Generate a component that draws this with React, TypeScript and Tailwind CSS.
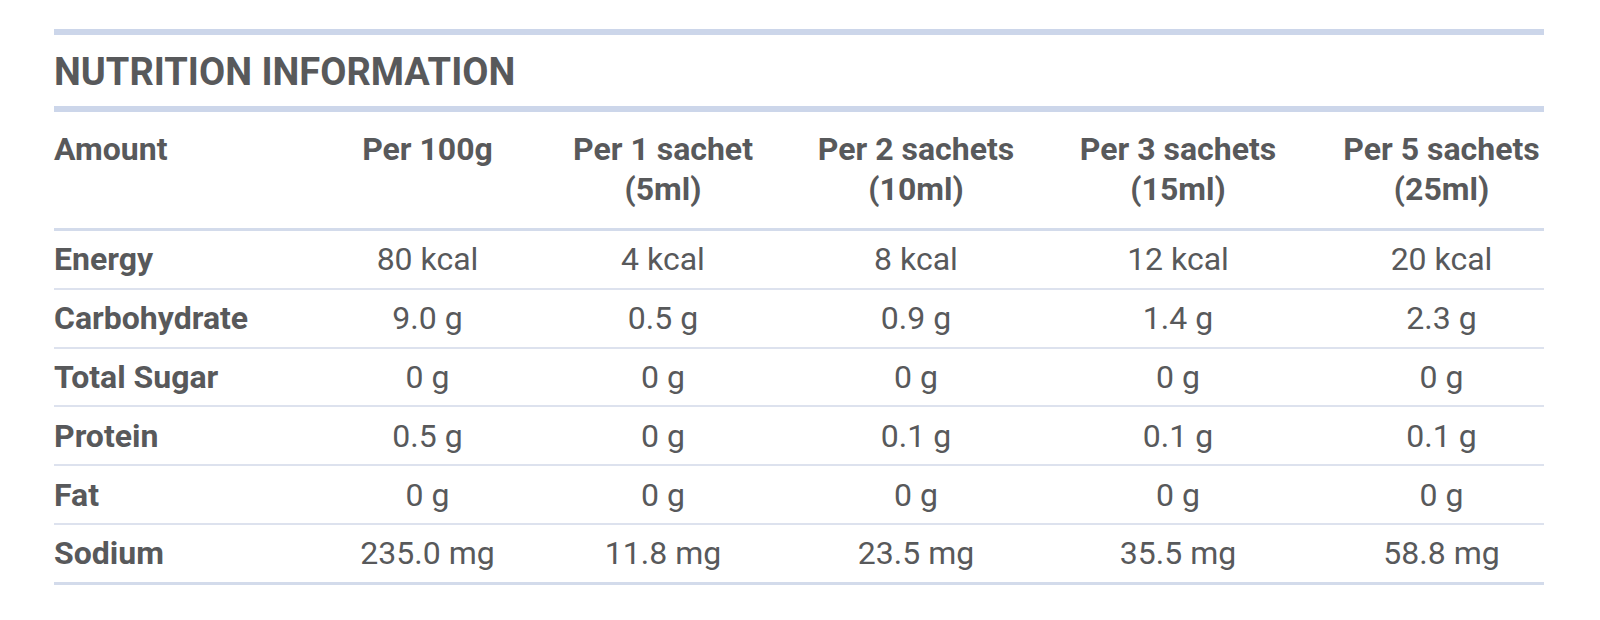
import React from "react";

const cols = "grid grid-cols-[266px_215px_256px_250px_298px_205px]";

const rows: [string, string[]][] = [
  ["Energy", ["80 kcal", "4 kcal", "8 kcal", "12 kcal", "20 kcal"]],
  ["Carbohydrate", ["9.0 g", "0.5 g", "0.9 g", "1.4 g", "2.3 g"]],
  ["Total Sugar", ["0 g", "0 g", "0 g", "0 g", "0 g"]],
  ["Protein", ["0.5 g", "0 g", "0.1 g", "0.1 g", "0.1 g"]],
  ["Fat", ["0 g", "0 g", "0 g", "0 g", "0 g"]],
  ["Sodium", ["235.0 mg", "11.8 mg", "23.5 mg", "35.5 mg", "58.8 mg"]],
];

const cellCls = ["text-center", "text-center", "text-center", "text-center pr-[24px]", "text-center"];

export default function App() {
  return (
    <div
      className="w-[1600px] h-[620px] bg-white text-[#58595b]"
      style={{ fontFamily: "Roboto, 'Liberation Sans', sans-serif" }}
    >
      <div className="ml-[54px] w-[1490px] pt-[29px]">
        <div className="h-[6px] bg-[#ccd6ea]" />
        <div className="h-[71px] flex items-center pt-[2px] text-[38px] font-bold leading-none">
          NUTRITION INFORMATION
        </div>
        <div className="h-[6px] bg-[#ccd6ea]" />
        <div
          className={`${cols} pt-[17px] pb-[19px] text-[32px] font-bold leading-[40px] border-b-[3px] border-[#d3dbeb]`}
        >
          <div>Amount</div>
          <div className={cellCls[0]}>Per 100g</div>
          <div className={cellCls[1]}>
            Per 1 sachet
            <br />
            (5ml)
          </div>
          <div className={cellCls[2]}>
            Per 2 sachets
            <br />
            (10ml)
          </div>
          <div className={cellCls[3]}>
            Per 3 sachets
            <br />
            (15ml)
          </div>
          <div className={cellCls[4]}>
            Per 5 sachets
            <br />
            (25ml)
          </div>
        </div>
        {rows.map(([label, vals], i) => (
          <div
            key={label}
            className={`${cols} h-[56.8px] items-center text-[32px] leading-none ${
              i === rows.length - 1
                ? "border-b-[3px] border-[#d3dbeb] box-content"
                : "border-b-2 border-[#dde2ee] box-content"
            }`}
          >
            <div className="font-bold">{label}</div>
            {vals.map((v, j) => (
              <div key={j} className={cellCls[j]}>
                {v}
              </div>
            ))}
          </div>
        ))}
      </div>
    </div>
  );
}
